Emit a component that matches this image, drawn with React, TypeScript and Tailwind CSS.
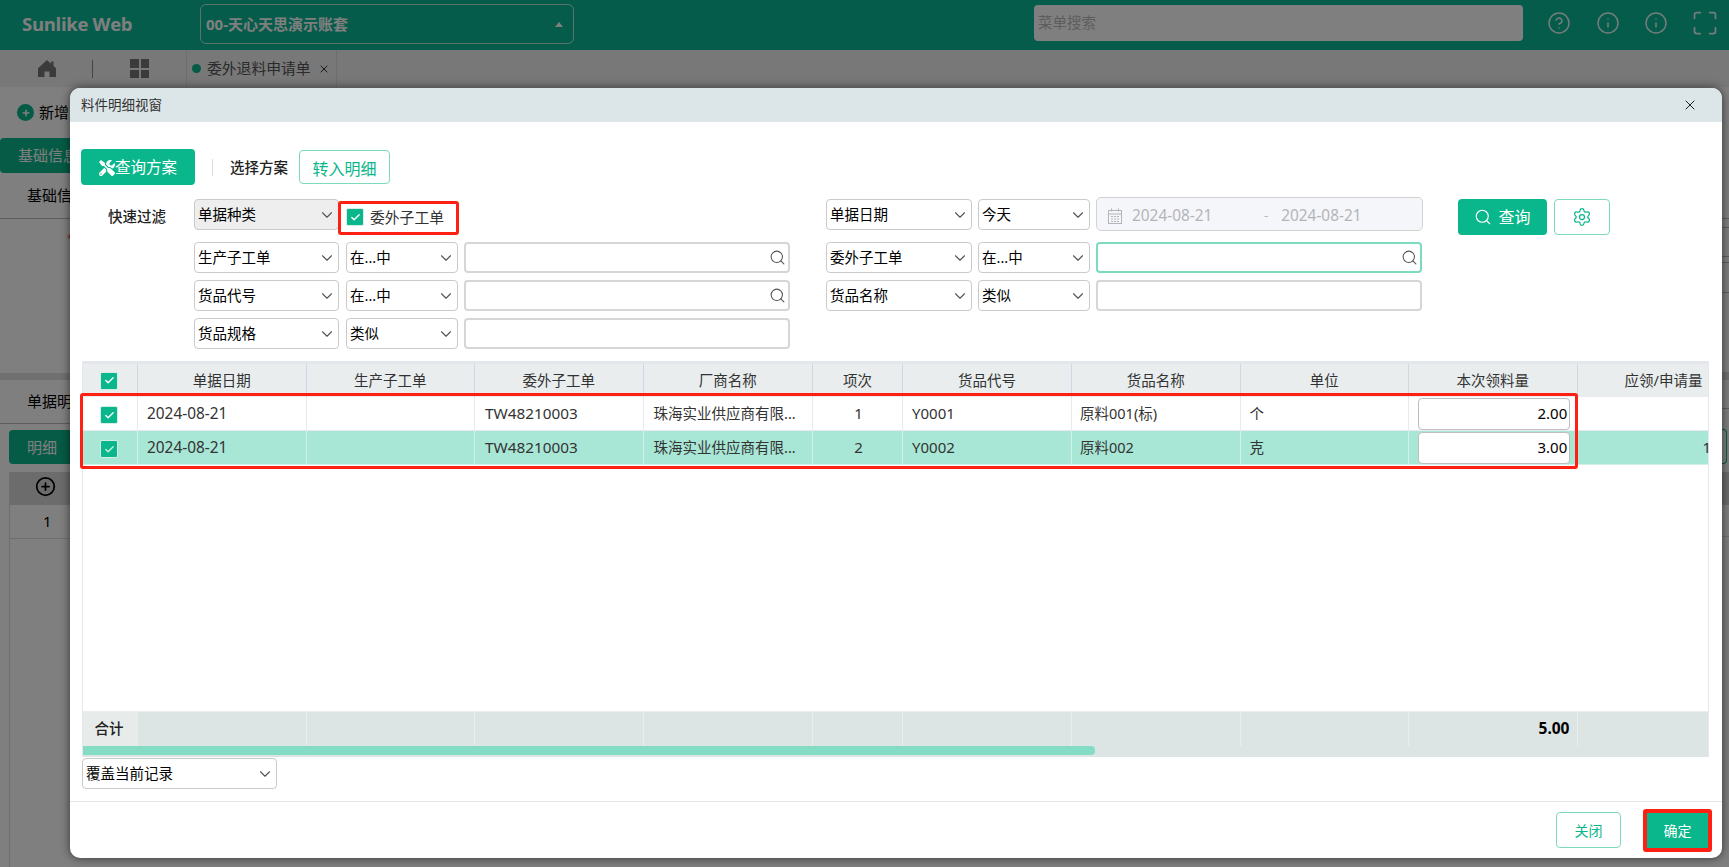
import React from "react";
import { ChevronDown, Search, Settings, X, CircleHelp, Info, Maximize, CirclePlus, Check } from "lucide-react";
import { FaTools, FaPlus } from "react-icons/fa";

const FONT = "font-['Noto_Sans','Noto_Sans_CJK_SC',sans-serif]";

function Chk({ light = false }: { light?: boolean }) {
  return (
    <span className={"flex h-[18px] w-[18px] items-center justify-center rounded-[2px] border border-[#d7ece6] bg-[#0ab68b] " + (light ? "text-[#c9f0e4]" : "text-white")}>
      <Check size={11} strokeWidth={3} />
    </span>
  );
}

function Sel({ w, label, bg = "bg-white", h = "h-[31px]" }: { w: string; label: string; bg?: string; h?: string }) {
  return (
    <div className={`${w} ${bg} ${h} flex shrink-0 items-center justify-between rounded-[4px] border-[1.5px] border-[#cacaca] pl-[3px] pr-[2px] text-[14.5px] text-black`}>
      <span>{label}</span>
      <ChevronDown size={18} strokeWidth={1.5} className="text-[#555]" />
    </div>
  );
}

function Inp({ w, search = false, active = false }: { w: string; search?: boolean; active?: boolean }) {
  return (
    <div className={`${w} flex h-[31px] shrink-0 items-center justify-end rounded-[4px] border-2 pr-[2px] ${active ? "border-[#7dd9c0]" : "border-[#d6d6d6]"}`}>
      {search && <Search size={17} strokeWidth={1.5} className="text-[#555]" />}
    </div>
  );
}

const cols = [
  "w-[55px]",
  "w-[168.5px]",
  "w-[168.5px]",
  "w-[168.5px]",
  "w-[169.5px]",
  "w-[90px]",
  "w-[169px]",
  "w-[168.5px]",
  "w-[168.5px]",
  "w-[168.5px]",
  "w-[133px]",
];

const headers = ["", "单据日期", "生产子工单", "委外子工单", "厂商名称", "项次", "货品代号", "货品名称", "单位", "本次领料量", "应领/申请量"];

function Row({ date, item, code, name, unit, qty, selected, last }: { date: string; item: string; code: string; name: string; unit: string; qty: string; selected?: boolean; last?: React.ReactNode }) {
  const b = selected ? "border-[#d3f0e8]" : "border-[#e9e9ef]";
  const cell = `flex shrink-0 items-center overflow-hidden whitespace-nowrap border-r ${b} `;
  return (
    <div className={`flex h-[34px] border-b text-[#333] ${b} ${selected ? "bg-[#a8e6d6]" : "bg-white"}`}>
      <div className={cell + cols[0] + " justify-center pr-[2px] pt-[3px]"}><Chk light={selected} /></div>
      <div className={cell + cols[1] + " pl-[9px] text-[15.4px]"}>{date}</div>
      <div className={cell + cols[2]} />
      <div className={cell + cols[3] + " pl-[10px] text-[15.3px]"}>TW48210003</div>
      <div className={cell + cols[4] + " pl-[10px] text-[14.5px]"}>珠海实业供应商有限...</div>
      <div className={cell + cols[5] + " justify-center pl-[2px] text-[15px]"}>{item}</div>
      <div className={cell + cols[6] + " pl-[9px] text-[15px]"}>{code}</div>
      <div className={cell + cols[7] + " pl-[8px] text-[14.5px]"}>{name}</div>
      <div className={cell + cols[8] + " pl-[9px] text-[14.5px]"}>{unit}</div>
      <div className={cell + cols[9] + " justify-center pl-[3px]"}>
        <div className="flex h-[32px] w-[152px] items-center justify-end rounded-[4px] border-[1.5px] border-[#bdbdbd] bg-white pr-[2px] text-[15px] text-black">{qty}</div>
      </div>
      <div className={`flex shrink-0 items-center overflow-hidden ${cols[10]} pl-[125px] text-[15px]`}>{last}</div>
    </div>
  );
}

function HomeIcon() {
  return (
    <svg width="18" height="17" viewBox="0 0 18 17" className="text-[#777]" fill="currentColor">
      <path d="M9 0L0 8.2V17h6.5v-5.5h5V17H18V8.2L15.5 6V1.5h-2.4v2.3z" />
    </svg>
  );
}

function CirclePlusFilled() {
  return (
    <span className="flex h-[17px] w-[17px] items-center justify-center rounded-full bg-[#0ab68b] text-white">
      <FaPlus size={8} />
    </span>
  );
}

function CalendarIcon() {
  return (
    <svg width="14" height="16" viewBox="0 0 14 16" fill="none" stroke="#b4b4b8" strokeWidth="1">
      <rect x="0.5" y="2.5" width="13" height="13" />
      <path d="M0.5 6h13M3.5 0.5v3M10.5 0.5v3M3 8.5h2M6 8.5h2M9 8.5h2M3 11h2M6 11h2M9 11h2M3 13.5h2M6 13.5h2M9 13.5h2" />
    </svg>
  );
}

export default function App() {
  return (
    <div className={`relative h-[867px] w-[1729px] overflow-hidden bg-white ${FONT}`}>
      {/* Page behind the dialog */}
      <header className="flex h-[50px] items-center bg-[#0ab894] pl-[22px]">
        <div className="-mt-[3px] w-[178px] font-['Open_Sans','Noto_Sans',sans-serif] text-[18.5px] font-bold tracking-[-0.3px] text-white">Sunlike Web</div>
        <div className="-mt-[2px] flex h-[40px] w-[374px] items-center justify-between rounded-[6px] border border-[#b6ebda] pl-[5px] pr-[10px] text-[15px] font-bold text-white">
          <span>00-天心天思演示账套</span>
          <span className="h-0 w-0 border-x-[4.5px] border-b-[5px] border-x-transparent border-b-white" />
        </div>
        <div className="-mt-[4px] ml-[460px] flex h-[36px] w-[489px] items-center rounded-[4px] bg-white pl-[4px] text-[14.5px] text-[#bbb]">菜单搜索</div>
        <div className="-mt-[4px] ml-[24px] flex items-center gap-[24.5px] text-white/90">
          <CircleHelp size={24} strokeWidth={1.5} />
          <Info size={24} strokeWidth={1.5} />
          <Info size={24} strokeWidth={1.5} />
          <Maximize size={28} strokeWidth={1.5} className="-ml-[2px]" />
        </div>
      </header>
      <div className="flex h-[37px] items-center bg-[#f0f0f0]">
        <span className="ml-[38px] flex"><HomeIcon /></span>
        <span className="ml-[36px] h-[18px] w-px bg-[#888]" />
        <div className="ml-[37px] grid h-[19px] w-[19px] grid-cols-2 gap-[2px]">
          <i className="bg-[#777]" /><i className="bg-[#777]" /><i className="bg-[#777]" /><i className="bg-[#777]" />
        </div>
        <div className="ml-[37px] flex h-full w-[151px] items-center border-x border-[#ddd] pl-[5px] text-[14.8px] text-[#555]">
          <span className="mr-[6px] h-[9px] w-[9px] rounded-full bg-[#0ab68b]" />
          委外退料申请单
          <X size={12} className="ml-[7px] text-[#333]" />
        </div>
      </div>
      <div className="flex h-[780px] bg-white">
        <div className="flex w-[100px] flex-col">
          <div className="flex h-[51px] items-center pl-[17px] text-[15px] text-black">
            <CirclePlusFilled />
            <span className="ml-[5px]">新增</span>
          </div>
          <div className="flex h-[35px] w-[90px] items-center rounded-[4px] bg-[#0ab68b] pl-[18px] text-[15px] text-white">基础信息</div>
          <div className="flex h-[46px] items-center border-b border-[#bbb] pl-[27px] text-[15px] text-black">基础信息</div>
          <div className="h-[154px] pl-[67px] pt-[12px] text-[10px] leading-[14px] text-[#f0443a]">*</div>
          <div className="h-[7px] bg-[#e0e0e0]" />
          <div className="flex h-[44px] items-center border-b border-[#bbb] pl-[27px] text-[15px] text-black">单据明细</div>
          <div className="ml-[9px] mt-[6px] flex h-[34px] w-[80px] items-center rounded-[4px] bg-[#0ab68b] pl-[18px] text-[15px] text-white">明细</div>
          <div className="ml-[9px] mt-[8px] flex h-[33px] w-[80px] items-center border-l border-[#ddd] bg-[#d9d9d9] pb-[4px] pl-[25px] text-black">
            <CirclePlus size={21} strokeWidth={2} />
          </div>
          <div className="ml-[9px] flex h-[34px] w-[80px] items-center border-b border-l border-[#ddd] pl-[33px] text-[15px] text-black">1</div>
          <div className="ml-[9px] flex-1 border-l border-[#ddd]" />
        </div>
        <div className="flex-1" />
        <div className="flex w-[15px] flex-col">
          <div className="h-[132px] border-b border-[#bbb]" />
          <div className="h-[9px] border-b border-[#bbb]" />
          <div className="h-[29px] border-b border-[#bbb]" />
          <div className="h-[6px] border-b border-[#bbb]" />
          <div className="h-[30px] border-b border-[#bbb]" />
          <div className="h-[79px]" />
          <div className="h-[8px] bg-[#e0e0e0]" />
          <div className="h-[29px] border-b border-[#bbb]" />
          <div className="h-[20px]" />
          <div className="mr-[2px] h-[35px] rounded-r-[4px] border border-l-0 border-[#0ab68b]" />
          <div className="h-[8px]" />
          <div className="h-[33px] bg-[#d9d9d9]" />
          <div className="h-[32px] border-b border-[#ddd]" />
        </div>
      </div>

      {/* Modal backdrop */}
      <div className="absolute inset-0 bg-black/50" />

      {/* Dialog */}
      <div className="absolute left-[70px] top-[88px] flex h-[770px] w-[1652px] flex-col overflow-hidden rounded-[10px] bg-white text-[14.5px] text-[#333] shadow-[0_0_10px_rgba(0,0,0,0.6)]">
        <div className="flex h-[34px] shrink-0 items-center justify-between bg-[#dce5e7] pl-[11px] pr-[24px] text-[13.5px]">
          <span>料件明细视窗</span>
          <X size={16} strokeWidth={1.5} className="text-[#222]" />
        </div>

        <div className="flex flex-1 flex-col pl-[11px]">
          {/* Toolbar */}
          <div className="mt-[27px] flex h-[36px] items-center">
            <button className="flex h-[36px] w-[114px] items-center justify-center rounded-[4px] bg-[#0ab68b] pt-[2px] text-[15.5px] text-white">
              <FaTools size={16} />
              查询方案
            </button>
            <span className="ml-[17px] h-[17px] w-px bg-[#ddd]" />
            <span className="ml-[17px] pt-[1px] text-[14.5px] font-medium text-[#222]">选择方案</span>
            <button className="ml-[11px] flex h-[34px] w-[91px] items-center justify-center rounded-[4px] border-[1.5px] border-[#7dd9c0] pt-[3px] text-[16px] text-[#0ab68b]">转入明细</button>
          </div>

          {/* Filters */}
          <div className="mt-[14px] flex">
            <div className="flex w-[745px] shrink-0 flex-col gap-[7px]">
              <div className="flex h-[36px]">
                <div className="w-[113px] pl-[27px] pt-[7px] text-[14.5px] font-medium text-[#222]">快速过滤</div>
                <Sel w="w-[145px]" label="单据种类" bg="bg-[#eeeeee]" />
                <div className="relative z-10 -ml-[1px] mt-[2px] flex h-[34px] w-[121px] items-center rounded-[3px] border-[3px] border-[#ff2014] pb-[2px] pl-[5px]">
                  <Chk />
                  <span className="ml-[6px] text-[14.8px] text-[#333]">委外子工单</span>
                </div>
              </div>
              {[
                ["生产子工单", "在...中", true],
                ["货品代号", "在...中", true],
                ["货品规格", "类似", false],
              ].map(([a, b, s]) => (
                <div key={a as string} className="flex gap-[7px] pl-[113px]">
                  <Sel w="w-[145px]" label={a as string} />
                  <Sel w="w-[112px]" label={b as string} />
                  <div className="-ml-[1px]"><Inp w="w-[326px]" search={s as boolean} /></div>
                </div>
              ))}
            </div>

            <div className="flex flex-col gap-[7px]">
              <div className="flex h-[36px] gap-[6px]">
                <Sel w="w-[146px]" label="单据日期" />
                <Sel w="w-[112px]" label="今天" />
                <div className="-mt-[2px] flex h-[34px] w-[327px] items-center rounded-[5px] border-[1.5px] border-[#d2d2d2] bg-[#f4f6fa] pl-[11px] pt-[3px] text-[15.4px] text-[#b4b4b8]">
                  <CalendarIcon />
                  <span className="ml-[10px] w-[132px]">2024-08-21</span>
                  <span className="text-[13px]">-</span>
                  <span className="ml-[13px]">2024-08-21</span>
                </div>
                <button className="ml-[29px] flex h-[36px] w-[89px] items-center justify-center gap-[6px] rounded-[4px] bg-[#0ab68b] text-[16px] text-white">
                  <Search size={18} strokeWidth={1.5} />
                  查询
                </button>
                <button className="-mr-[1px] ml-[1px] flex h-[36px] w-[56px] items-center justify-center rounded-[4px] border-[1.5px] border-[#7dd9c0] text-[#0ab68b]">
                  <Settings size={20} strokeWidth={1.5} />
                </button>
              </div>
              <div className="flex gap-[6px]">
                <Sel w="w-[146px]" label="委外子工单" />
                <Sel w="w-[112px]" label="在...中" />
                <Inp w="w-[326px]" search active />
              </div>
              <div className="flex gap-[6px]">
                <Sel w="w-[146px]" label="货品名称" />
                <Sel w="w-[112px]" label="类似" />
                <Inp w="w-[326px]" />
              </div>
            </div>
          </div>

          {/* Table */}
          <div className="relative ml-[1px] mt-[12px] flex h-[396px] w-[1627px] flex-col border-l border-r border-[#e6e8ee]">
            <div className="h-[3px] shrink-0 bg-[#e4e6ee]" />
            <div className="flex h-[33px] shrink-0 bg-[#e9eded] text-[14.5px] text-[#333]">
              {headers.map((h, i) => (
                <div key={i} className={`flex shrink-0 items-center whitespace-nowrap ${cols[i]} ${i === 10 ? "justify-end pr-[8px]" : "justify-center border-r border-[#d4d6e6]"} ${i === 0 ? "pr-[2px]" : ""}`}>
                  {i === 0 ? <Chk /> : h}
                </div>
              ))}
            </div>
            <Row date="2024-08-21" item="1" code="Y0001" name="原料001(标)" unit="个" qty="2.00" />
            <Row date="2024-08-21" item="2" code="Y0002" name="原料002" unit="克" qty="3.00" selected last="1" />
            <div className="flex-1" />
            <div className="flex h-[35px] shrink-0 border-t border-[#e9eeec] bg-[#dce5e3]">
              {cols.map((c, i) => (
                <div key={i} className={`flex shrink-0 items-center ${c} ${i < 10 ? "border-r border-[#e9eeec]" : ""} ${i === 0 ? "justify-center bg-[#e7eceb] pr-[2px] text-[14.5px] font-medium text-[#222]" : ""} ${i === 9 ? "justify-end pr-[7px] text-[15.5px] font-bold text-black" : ""}`}>
                  {i === 0 ? "合计" : i === 9 ? "5.00" : ""}
                </div>
              ))}
            </div>
            <div className="h-[11px] shrink-0 bg-[#dce5e3]">
              <div className="h-[9px] w-[1012px] rounded-r-[4px] bg-[#84dcc4]" />
            </div>
            {/* Annotation around the two rows */}
            <div className="absolute left-[-3px] top-[32px] h-[76px] w-[1498px] rounded-[3px] border-[3px] border-[#ff2014]" />
          </div>

          <div className="ml-[1px] mt-[1px] h-[31px] w-[195px]">
            <Sel w="w-[195px]" label="覆盖当前记录" />
          </div>
        </div>

        {/* Footer */}
        <div className="mt-[12px] flex h-[57px] shrink-0 items-center justify-end border-t border-[#e6e6e6] pr-[10px]">
          <button className="flex h-[36px] w-[65px] items-center justify-center rounded-[4px] border-[1.5px] border-[#7dd9c0] text-[14px] text-[#0ab68b]">关闭</button>
          <button className="ml-[22px] flex h-[43px] w-[69px] items-center justify-center rounded-[3px] border-[4px] border-[#ff2014] bg-[#0ab68b] text-[14px] text-white">确定</button>
        </div>
      </div>
    </div>
  );
}
